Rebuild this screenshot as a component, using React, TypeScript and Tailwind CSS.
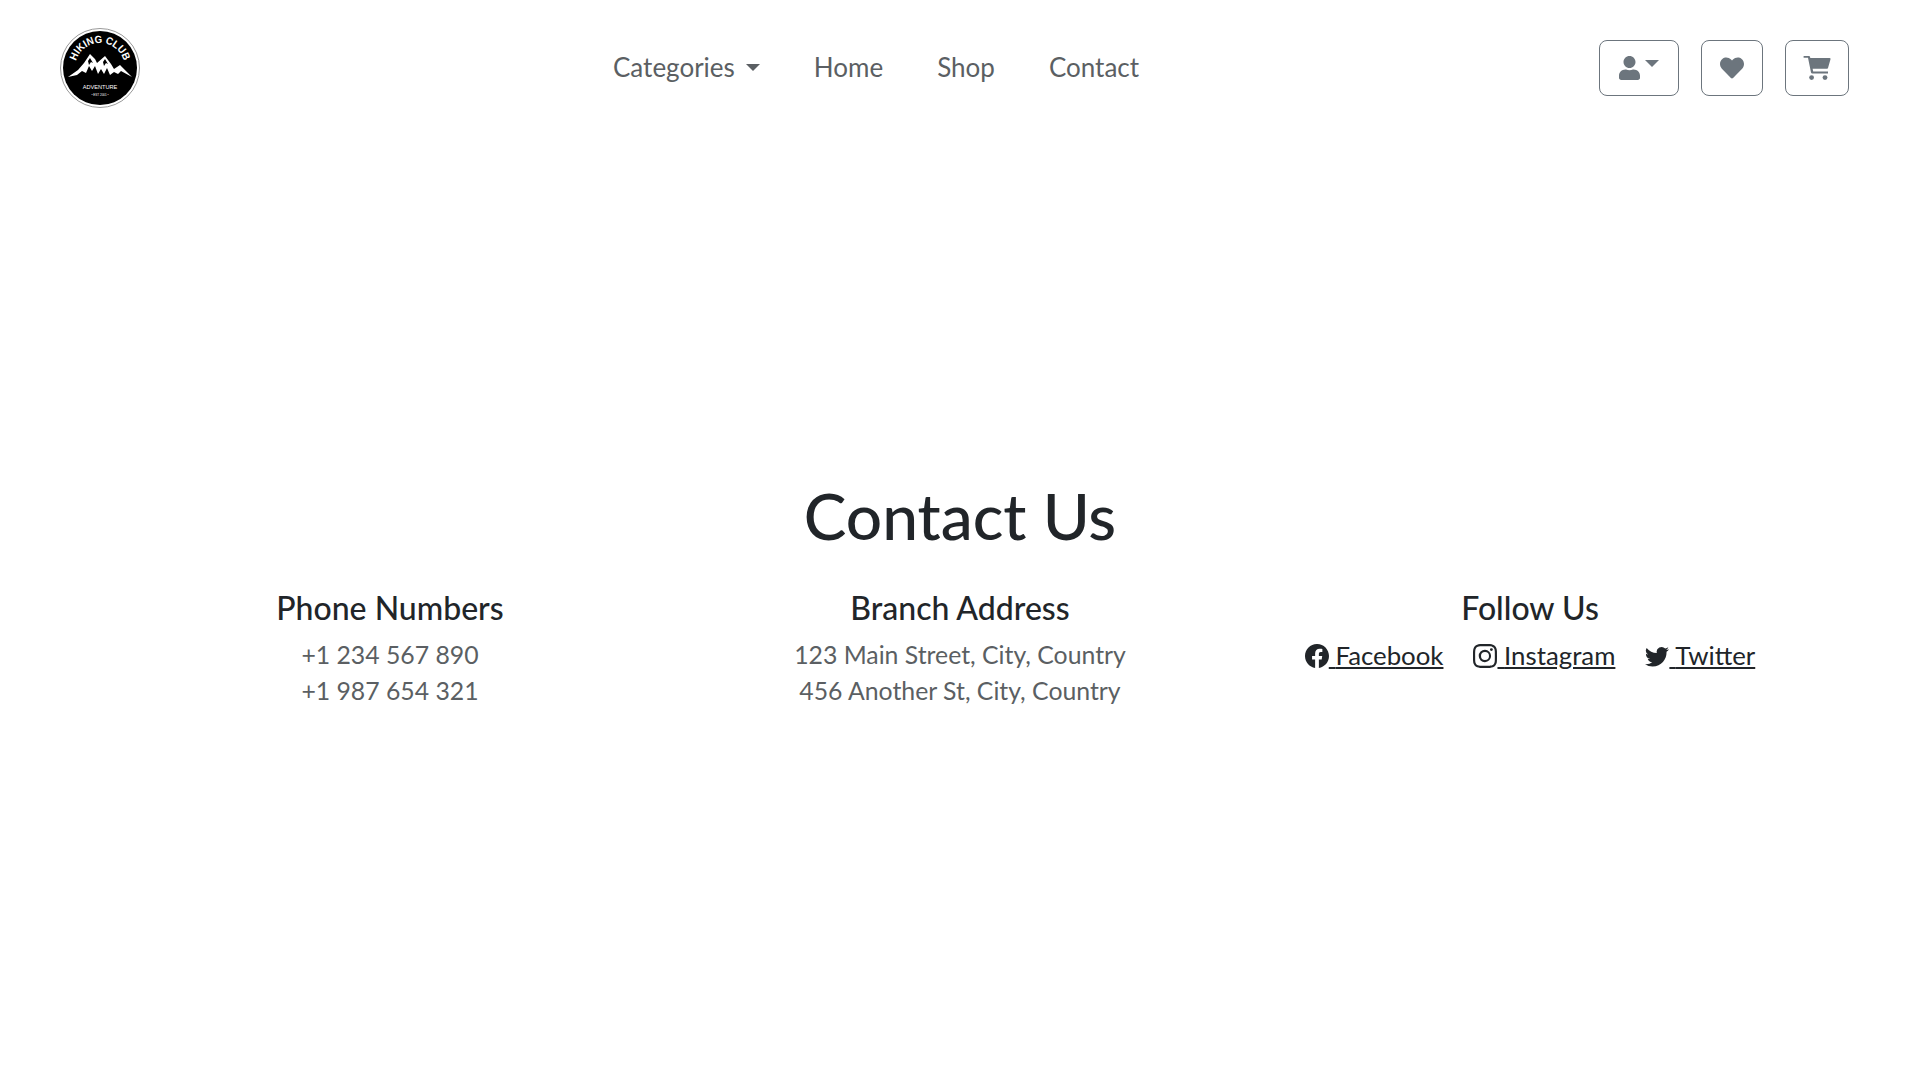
import { BsFacebook, BsInstagram, BsTwitter } from "react-icons/bs";
import { FaHeart, FaUser } from "react-icons/fa";

const navLinks = ["Home", "Shop", "Contact"];

const socials = [
  { label: "Facebook", Icon: BsFacebook },
  { label: "Instagram", Icon: BsInstagram },
  { label: "Twitter", Icon: BsTwitter },
];

function Caret() {
  return <span className="inline-block h-0 w-0 border-x-[7px] border-t-[7px] border-x-transparent border-t-current" />;
}

function CartIcon() {
  return (
    <svg viewBox="0 0 27.5 24" className="h-[24px] w-[27.5px]" fill="currentColor">
      <path d="M0.6 0 H6 a1 1 0 0 1 1 0.8 L7.3 2 H26.5 a1 1 0 0 1 1 1.2 L25 12 a1 1 0 0 1 -1 0.8 H9.6 L10.2 15.4 H25 V17.4 H9 a1 1 0 0 1 -1 -0.8 L5 1.8 H0.6 Z" />
      <circle cx="8.6" cy="21.6" r="2.4" />
      <circle cx="22" cy="21.6" r="2.4" />
    </svg>
  );
}

function Logo() {
  return (
    <svg viewBox="0 0 80 80" className="h-[80px] w-[80px]">
      <circle cx="40" cy="40" r="39.5" fill="#fff" stroke="#9a9a9a" strokeWidth="1" />
      <circle cx="40" cy="40" r="37" fill="#000" />
      <defs>
        <path id="logo-arc" d="M15 40 A25 25 0 0 1 65 40" />
      </defs>
      <text fill="#fff" fontFamily="'Liberation Sans', sans-serif" fontSize="10.5" fontWeight="700">
        <textPath href="#logo-arc" startOffset="50%" textAnchor="middle" textLength="64" lengthAdjust="spacingAndGlyphs">HIKING CLUB</textPath>
      </text>
      <path d="M8 49 L18 42 L24 35 L30 26 L35 31 L37 35 L45 28 L51 36 L54 41 L60 37 L72 49 L61 43 L58 46 L54 44 L50 47 L47 40 L44 46 L41 41 L38 46 L35 38 L32 43 L29 38 L26 45 L22 43 L17 47 Z" fill="#fff" />
      <path d="M28 33 L30 30 L33 35 L31 34 L29 37 Z M43 34 L45 31 L48 36 L46 35 L44 38 Z" fill="#000" />
      <text x="40" y="61" textAnchor="middle" fill="#fff" fontFamily="'Liberation Sans', sans-serif" fontSize="5.6">ADVENTURE</text>
      <text x="40" y="68" textAnchor="middle" fill="#fff" fontFamily="'Liberation Sans', sans-serif" fontSize="3">• EST 2001 •</text>
    </svg>
  );
}

export default function App() {
  return (
    <div className="min-h-[1080px] bg-white font-['Lato','Open_Sans',sans-serif] text-[24.8px] leading-[36px] text-[#212529]">
      <nav className="relative flex h-[135px] items-center justify-between pl-[60px] pr-[71px]">
        <Logo />

        <div className="absolute left-[613px] top-0 flex h-full items-center gap-[54px] pb-[1px] text-[26px] text-[#5b5f63]">
          <a className="flex items-center gap-[11px]">
            Categories <Caret />
          </a>
          {navLinks.map((link) => (
            <a key={link}>{link}</a>
          ))}
        </div>

        <div className="flex items-center gap-[22px] text-[#6c757d]">
          <button className="flex h-[56px] w-[80px] items-center justify-center gap-[5px] rounded-lg border border-[#6c757d]">
            <FaUser className="h-[24px] w-[21px]" />
            <span className="mb-[8px] flex">
              <Caret />
            </span>
          </button>
          <button className="flex h-[56px] w-[62px] items-center justify-center rounded-lg border border-[#6c757d]">
            <FaHeart className="h-[24px] w-[24px]" />
          </button>
          <button className="flex h-[56px] w-[64px] items-center justify-center rounded-lg border border-[#6c757d]">
            <CartIcon />
          </button>
        </div>
      </nav>

      <main className="mx-auto w-[1710px] pt-[339px] text-center">
        <h1 className="mb-[32px] text-[64px] leading-[84px] font-medium">Contact Us</h1>

        <div className="grid grid-cols-3">
          <section>
            <h3 className="mb-[11px] text-[32px] leading-[36px] font-medium">Phone Numbers</h3>
            <p className="text-[#5b5f63]">+1 234 567 890</p>
            <p className="text-[#5b5f63]">+1 987 654 321</p>
          </section>

          <section>
            <h3 className="mb-[11px] text-[32px] leading-[36px] font-medium">Branch Address</h3>
            <p className="text-[#5b5f63]">123 Main Street, City, Country</p>
            <p className="text-[#5b5f63]">456 Another St, City, Country</p>
          </section>

          <section>
            <h3 className="mb-[11px] text-[32px] leading-[36px] font-medium">Follow Us</h3>
            <div className="flex justify-center gap-[30px] text-[25.8px]">
              {socials.map(({ label, Icon }) => (
                <a key={label} className="underline">
                  <Icon size={24} className="inline-block align-[-3px]" /> {label}
                </a>
              ))}
            </div>
          </section>
        </div>
      </main>
    </div>
  );
}
